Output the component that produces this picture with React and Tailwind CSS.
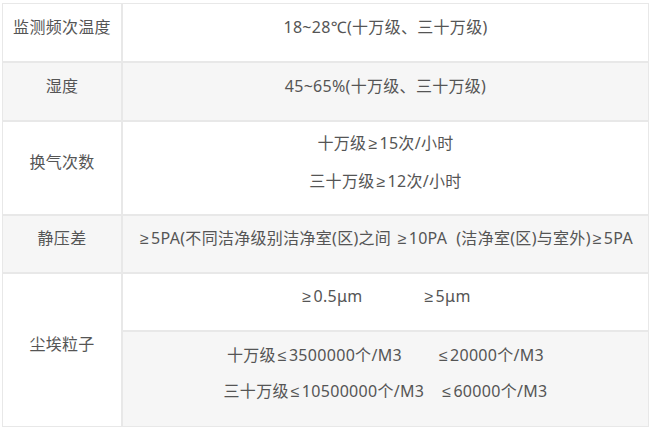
import React from "react";

const cell = "border border-[#e8e8e8] text-center align-middle pb-[12px]";

// narrow math sign with a little air around it
const Sign = ({ children }) => <span className="px-[2px]">{children}</span>;

const App = () => {
    return (
        <div
            className="w-[652px] h-[431px] bg-white pl-[2px] pt-[3px] text-[16px] text-[#555] tracking-[0.3px]"
            style={{ fontFamily: '"Noto Sans", "Liberation Sans", "Noto Sans CJK SC", sans-serif' }}
        >
            <table className="w-[647px] border-separate border-spacing-0 table-fixed">
                <colgroup>
                    <col className="w-[120px]" />
                    <col />
                </colgroup>
                <tbody>
                    {/* 温度 */}
                    <tr>
                        <td className={`${cell} h-[59px] bg-white`}>监测频次温度</td>
                        <td className={`${cell} h-[59px] bg-white`}>18~28℃(十万级、三十万级)</td>
                    </tr>
                    <tr>
                        <td className={`${cell} h-[59px] bg-[#f6f6f6]`}>湿度</td>
                        <td className={`${cell} h-[59px] bg-[#f6f6f6]`}>45~65%(十万级、三十万级)</td>
                    </tr>
                    {/* 换气 */}
                    <tr>
                        <td className={`${cell} h-[94px] bg-white leading-[38px]`}>换气次数</td>
                        <td className={`${cell} h-[94px] bg-white leading-[38px]`}>
                            <div>十万级<Sign>≥</Sign>15次/小时</div>
                            <div>三十万级<Sign>≥</Sign>12次/小时</div>
                        </td>
                    </tr>
                    <tr>
                        <td className={`${cell} h-[58px] bg-[#f6f6f6]`}>静压差</td>
                        <td className={`${cell} h-[58px] bg-[#f6f6f6] whitespace-nowrap`}>
                            <Sign>≥</Sign>5PA(不同洁净级别洁净室(区)之间 <Sign>≥</Sign>10PA&nbsp;&nbsp;(洁净室(区)与室外)<Sign>≥</Sign>5PA
                        </td>
                    </tr>
                    {/* 尘埃粒子 */}
                    <tr>
                        <td rowSpan={2} className={`${cell} bg-white`}>尘埃粒子</td>
                        <td className={`${cell} h-[58px] bg-white`}>
                            <span><Sign>≥</Sign>0.5μm</span>
                            <span className="ml-[60px]"><Sign>≥</Sign>5μm</span>
                        </td>
                    </tr>
                    <tr>
                        <td className={`${cell} h-[96px] bg-[#f6f6f6] leading-[36px] whitespace-nowrap`}>
                            <div>
                                <span>十万级<Sign>≤</Sign>3500000个/M3</span>
                                <span className="ml-[35px]"><Sign>≤</Sign>20000个/M3</span>
                            </div>
                            <div>
                                <span>三十万级<Sign>≤</Sign>10500000个/M3</span>
                                <span className="ml-[16px]"><Sign>≤</Sign>60000个/M3</span>
                            </div>
                        </td>
                    </tr>
                </tbody>
            </table>
        </div>
    );
};

export default App;
